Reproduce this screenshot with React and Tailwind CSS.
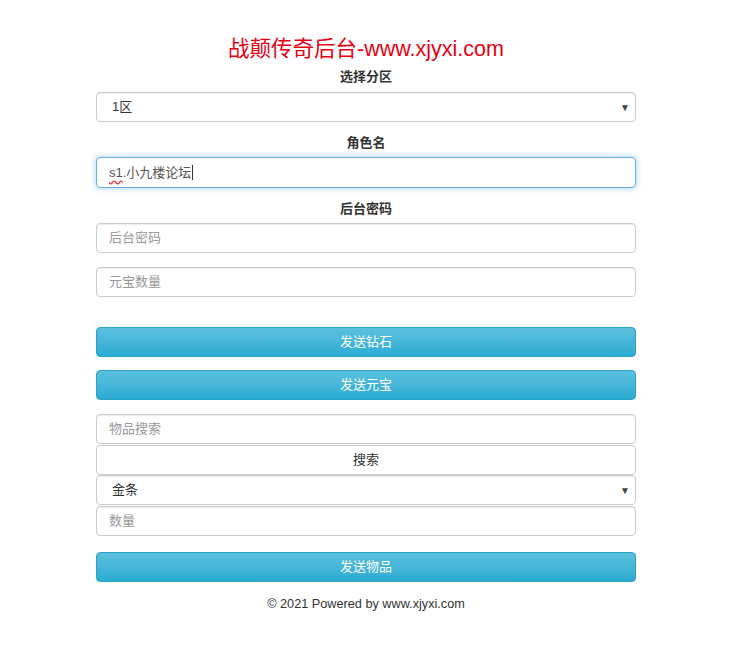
import React from "react";

const font = { fontFamily: '"Liberation Sans", Arial, "Noto Sans CJK SC", sans-serif' };

function Label({ children }) {
  return (
    <div className="text-center text-[13px] font-bold text-[#333] leading-[18px]">{children}</div>
  );
}

function Field({ placeholder, className = "" }) {
  return (
    <div className={"h-[30px] border border-[#ccc] rounded-[4px] bg-white flex items-center px-3 text-[13px] text-[#999] shadow-[inset_0_1px_1px_rgba(0,0,0,0.075)] " + className}>
      {placeholder}
    </div>
  );
}

function Select({ value, className = "" }) {
  return (
    <div className={"h-[30px] border border-[#ccc] rounded-[4px] bg-white flex items-center justify-between pl-[15px] pr-[5px] text-[13px] text-[#333] shadow-[inset_0_1px_1px_rgba(0,0,0,0.075)] " + className}>
      <span>{value}</span>
      <span className="text-[10px] text-[#444]">▼</span>
    </div>
  );
}

function InfoButton({ children, className = "" }) {
  return (
    <div className={"h-[30px] rounded-[4px] border border-[#28a4c9] bg-gradient-to-b from-[#5bc0de] to-[#2aabd2] flex items-center justify-center text-[13px] text-white " + className}>
      {children}
    </div>
  );
}

export default function App() {
  return (
    <div className="w-[744px] h-[661px] bg-white" style={font}>
      <div className="w-[540px] ml-[96px] pt-[37px]">
        <div className="text-center text-[21.5px] leading-[24px] text-[#e60012]">战颠传奇后台-www.xjyxi.com</div>
        <div className="mt-[7px]"><Label>选择分区</Label></div>
        <Select value="1区" className="mt-[6px]" />
        <div className="mt-[12px]"><Label>角色名</Label></div>
        <div className="mt-[5px] h-[31px] border border-[#66afe9] rounded-[4px] bg-white flex items-center px-3 text-[13px] text-[#555] shadow-[0_0_6px_rgba(102,175,233,0.6)]">
          <span className="underline decoration-wavy decoration-[#e33] underline-offset-[3px]">s1</span>
          <span>.小九楼论坛</span>
          <span className="w-px h-[15px] bg-[#333] ml-px"></span>
        </div>
        <div className="mt-[12px]"><Label>后台密码</Label></div>
        <Field placeholder="后台密码" className="mt-[5px]" />
        <Field placeholder="元宝数量" className="mt-[14px]" />
        <InfoButton className="mt-[30px]">发送钻石</InfoButton>
        <InfoButton className="mt-[13px]">发送元宝</InfoButton>
        <Field placeholder="物品搜索" className="mt-[14px]" />
        <div className="mt-[1px] h-[30px] border border-[#ccc] rounded-[4px] bg-white flex items-center justify-center text-[13px] text-[#333]">搜索</div>
        <Select value="金条" className="mt-0" />
        <Field placeholder="数量" className="mt-[1px]" />
        <InfoButton className="mt-[16px]">发送物品</InfoButton>
        <div className="mt-[13px] text-center text-[12.7px] leading-[18px] text-[#333]">© 2021 Powered by www.xjyxi.com</div>
      </div>
    </div>
  );
}
